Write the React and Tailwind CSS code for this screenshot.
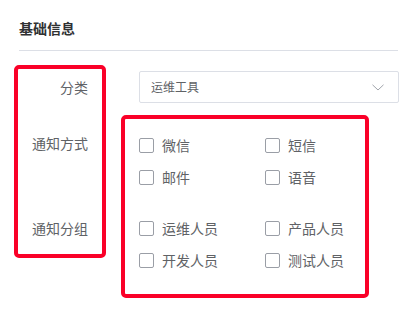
import { useState } from "react";

const channels = ["微信", "短信", "邮件", "语音"];
const groups = ["运维人员", "产品人员", "开发人员", "测试人员"];

function Check({ label, checked, onToggle }) {
  return (
    <label className="flex items-center h-8 cursor-pointer select-none">
      <span
        onClick={onToggle}
        className={
          "w-[15px] h-[15px] rounded-[2px] border " +
          (checked ? "border-[#409eff] bg-[#409eff]" : "border-[#9a9ea6] bg-white")
        }
      />
      <span className="ml-2 text-[14px] text-[#606266]">{label}</span>
    </label>
  );
}

function App() {
  const [picked, setPicked] = useState({});
  const toggle = (k) => setPicked((p) => ({ ...p, [k]: !p[k] }));

  return (
    <main
      className="w-[415px] h-[328px] bg-white overflow-hidden"
      style={{ fontFamily: '"Noto Sans CJK SC", "Noto Sans", sans-serif' }}
    >
      <div className="pl-[19px] pr-[17px] pt-[18px]">
        <h2 className="text-[14px] leading-5 font-bold text-[#303133]">基础信息</h2>
        <div className="mt-3 h-px bg-[#dcdfe6]" />
      </div>

      <div className="flex pl-[14px] mt-[14px]">
        {/* labels */}
        <div className="w-[92px] h-[193px] border-4 border-[#fa0028] rounded-[5px] pt-[2px] pr-[14px] flex flex-col items-end text-[14px] text-[#606266]">
          <div className="h-8 flex items-center">分类</div>
          <div className="h-8 flex items-center mt-[24px]">通知方式</div>
          <div className="h-8 flex items-center mt-[53px]">通知分组</div>
        </div>

        <div className="ml-[15px] pt-[6px]">
          <div className="ml-[18px] w-[260px] h-8 border border-[#dcdfe6] rounded-[2px] flex items-center justify-between pl-[11px] pr-[14px]">
            <span className="text-[12px] text-[#606266]">运维工具</span>
            <svg width="12" height="7" viewBox="0 0 12 7" fill="none">
              <path d="M0.5 0.8 L6 6 L11.5 0.8" stroke="#a0a4ab" strokeWidth="1" />
            </svg>
          </div>

          <div className="mt-3 w-[248px] h-[183px] border-4 border-[#fa0028] rounded-[5px] pl-[14px] pt-[10px]">
            <div className="grid grid-cols-[126px_1fr]">
              {channels.map((c) => (
                <Check key={c} label={c} checked={!!picked[c]} onToggle={() => toggle(c)} />
              ))}
            </div>
            <div className="grid grid-cols-[126px_1fr] mt-[19px]">
              {groups.map((g) => (
                <Check key={g} label={g} checked={!!picked[g]} onToggle={() => toggle(g)} />
              ))}
            </div>
          </div>
        </div>
      </div>
    </main>
  );
}

export default App;
